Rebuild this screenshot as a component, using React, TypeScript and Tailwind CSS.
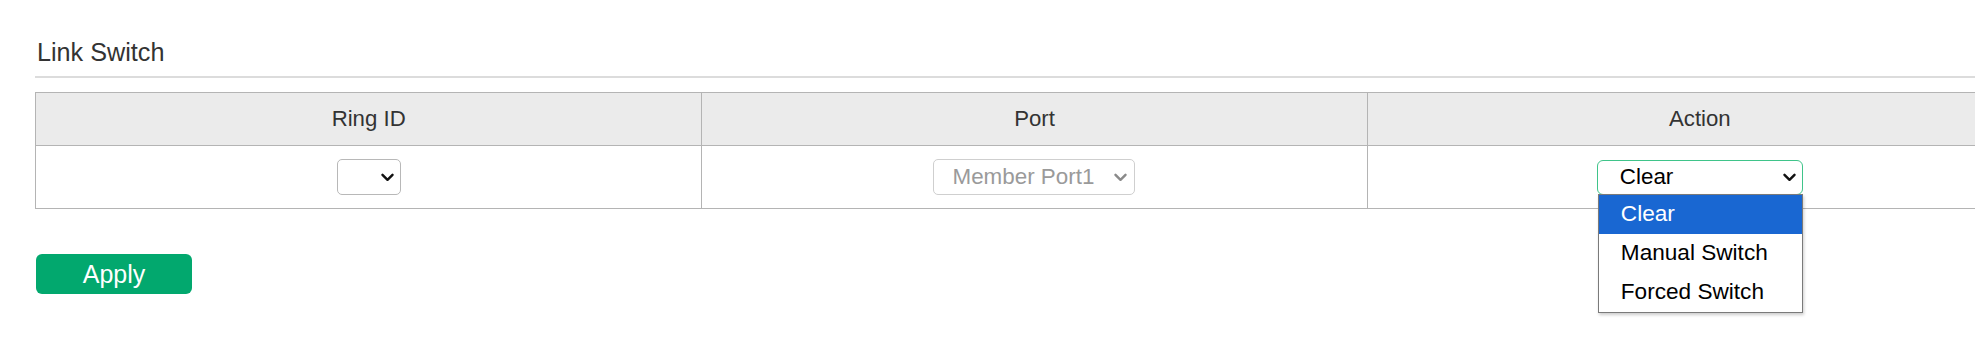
import React from 'react';

const Chevron = ({ color = '#111' }: { color?: string }) => (
  <svg width="13" height="9" viewBox="0 0 13 9" fill="none">
    <path d="M1.5 1.8 L6.5 6.8 L11.5 1.8" stroke={color} strokeWidth="2.4" strokeLinecap="round" strokeLinejoin="round" />
  </svg>
);

const options = ['Clear', 'Manual Switch', 'Forced Switch'];

export default function App() {
  return (
    <div className="w-full h-[349px] overflow-hidden bg-white text-[#333] font-['Liberation_Sans',Arial,sans-serif]">
      <div className="pl-[35px] w-[2040px]">
        <div className="pt-[38px] pl-[2px] text-[25.2px] leading-[28px] text-[#333]">Link Switch</div>
        <div className="mt-[10px] h-[2px] bg-[#dcdcdc]" />

        <div className="mt-[14px] w-[1998px] border-[1.5px] border-[#b4b4b4]">
          <div className="grid grid-cols-3 bg-[#ebebeb] border-b-[1.5px] border-[#b4b4b4] h-[53px]">
            <div className="flex items-center justify-center text-[22.2px]">Ring ID</div>
            <div className="flex items-center justify-center text-[22.2px] border-l-[1.5px] border-[#b4b4b4]">Port</div>
            <div className="flex items-center justify-center text-[22.2px] border-l-[1.5px] border-[#b4b4b4]">Action</div>
          </div>
          <div className="grid grid-cols-3 h-[62px]">
            <div className="flex items-center justify-center">
              <div className="w-[64px] h-[36px] border border-[#b8b8b8] rounded-[5px] bg-white flex items-center justify-end pr-[6px]">
                <Chevron />
              </div>
            </div>
            <div className="flex items-center justify-center border-l-[1.5px] border-[#b4b4b4]">
              <div className="w-[202px] h-[36px] border border-[#cfcfcf] rounded-[5px] bg-white flex items-center justify-between pl-[18px] pr-[7px]">
                <span className="text-[22.4px] text-[#9a9a9a] leading-none">Member Port1</span>
                <Chevron color="#8a8a8a" />
              </div>
            </div>
            <div className="flex items-center justify-center border-l-[1.5px] border-[#b4b4b4]">
              <div className="relative w-[206px] h-[35px]">
                <div className="w-full h-full border-[1.5px] border-[#3fc48a] rounded-[6px] bg-white flex items-center justify-between pl-[22px] pr-[6px]">
                  <span className="text-[22.4px] text-black leading-none">Clear</span>
                  <Chevron />
                </div>
                <div className="absolute left-[1px] top-[34px] w-[205px] bg-white border-[1.5px] border-[#7a7a7a] shadow-[1px_2px_3px_rgba(0,0,0,0.2)] z-10">
                  {options.map((o, i) => (
                    <div
                      key={o}
                      className={`h-[39px] flex items-center pl-[22px] text-[22.6px] ${i === 0 ? 'bg-[#1967d2] text-white' : 'text-black'}`}
                    >
                      {o}
                    </div>
                  ))}
                </div>
              </div>
            </div>
          </div>
        </div>

        <button className="mt-[45px] ml-[1px] w-[156px] h-[40px] rounded-[6px] bg-[#02a86e] text-white text-[25px] leading-none flex items-center justify-center">
          Apply
        </button>
      </div>
    </div>
  );
}
